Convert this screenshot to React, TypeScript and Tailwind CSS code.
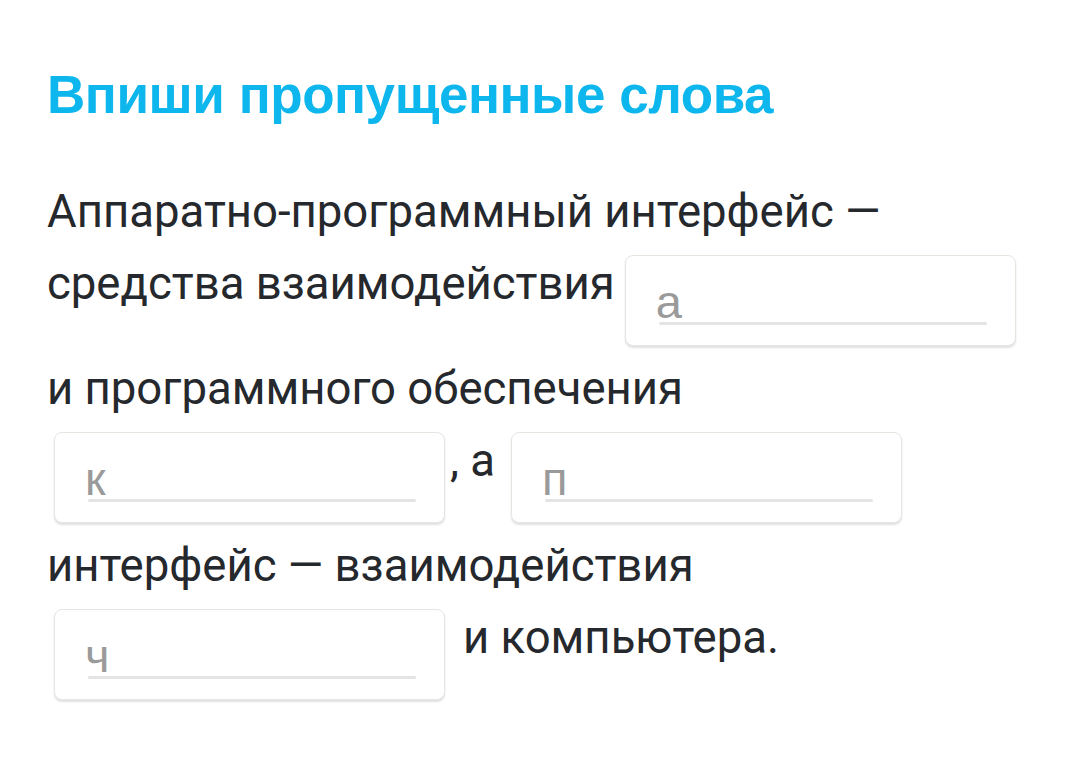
import React from "react";

function Blank({ hint }: { hint: string }) {
  return (
    <div className="relative w-[391px] h-[91px] shrink-0 rounded-[8px] border border-[#e6e6e1] bg-white shadow-[0_2px_2px_rgba(0,0,0,0.12)]">
      <span className="absolute left-[30px] top-[23px] text-[47px] leading-[46px] text-[#9a9a9a] font-['Liberation_Sans',Arial,sans-serif]">
        {hint}
      </span>
      <div className="absolute left-[33px] right-[28px] top-[66px] h-[3px] rounded bg-[#e4e4e4]" />
    </div>
  );
}

export default function App() {
  const text = "text-[45.5px] leading-[72px] text-[#25282c] whitespace-nowrap";
  return (
    <div className="w-[1080px] h-[781px] bg-white font-['Roboto',sans-serif] px-[47px] pt-[60px]">
      <h1 className="text-[53px] leading-[70px] font-bold text-[#0db6ec] font-['Liberation_Sans',Arial,sans-serif] tracking-[-0.45px]">
        Впиши пропущенные слова
      </h1>
      <div className="mt-[46px]">
        <div className={text}>Аппаратно-программный интерфейс —</div>
        <div className="flex items-start gap-[10px]">
          <span className={text}>средства взаимодействия</span>
          <div className="mt-[7px]">
            <Blank hint="а" />
          </div>
        </div>
        <div className={`${text} mt-[7px]`}>и программного обеспечения</div>
        <div className="flex items-start pl-[7px]">
          <div className="mt-[7px]">
            <Blank hint="к" />
          </div>
          <span className={`${text} ml-[5px] mr-[16px]`}>, а</span>
          <div className="mt-[7px]">
            <Blank hint="п" />
          </div>
        </div>
        <div className={`${text} mt-[7px]`}>интерфейс — взаимодействия</div>
        <div className="flex items-start pl-[7px]">
          <div className="mt-[7px]">
            <Blank hint="ч" />
          </div>
          <span className={`${text} ml-[18px]`}>и компьютера.</span>
        </div>
      </div>
    </div>
  );
}
